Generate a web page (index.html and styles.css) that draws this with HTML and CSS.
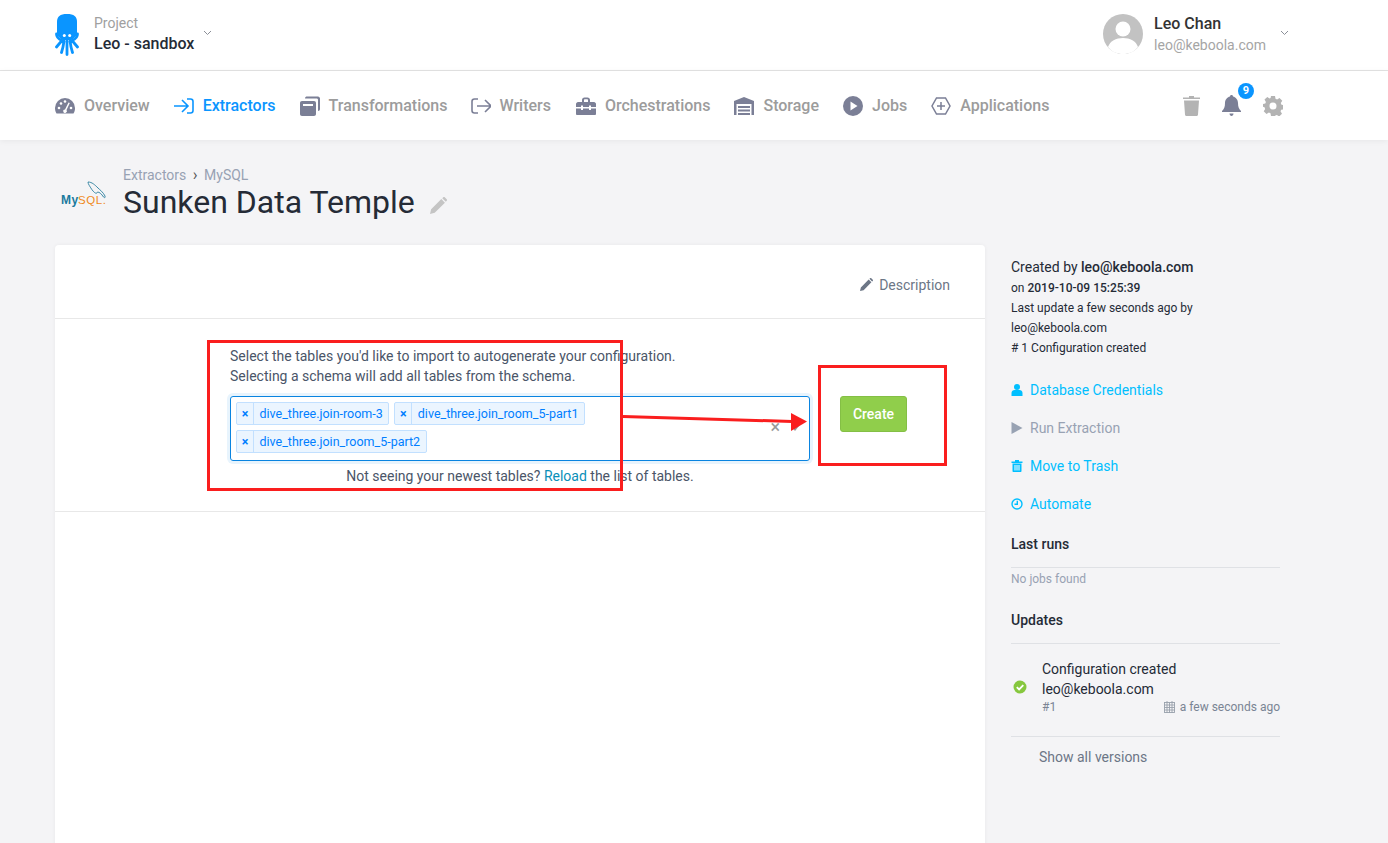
FILE: index.html
```html
<!DOCTYPE html>
<html lang="en">
<head>
    <meta charset="UTF-8">
    <title>Sunken Data Temple</title>
    <link rel="stylesheet" href="styles.css">
</head>
<body>
<div class="top">
    <div class="project">
        <svg class="logo" width="24" height="42" viewBox="0 0 24 42">
            <path fill="#0a95ff" d="M2 8C2 2.500 5 0 12 0s10 2.500 10 8v11c0 2-1 3-3 5-1 1-2 2-3 2H8c-1 0-2-1-3-2-2-2-3-3-3-5z"/>
            <circle cx="9.300" cy="21.500" r="1.500" fill="#fff"/><circle cx="14.700" cy="21.500" r="1.500" fill="#fff"/>
            <path fill="none" stroke="#0a95ff" stroke-width="2.800" stroke-linecap="round" d="M1.500 20c0 3 2 5 5.500 6.500L1.500 33M22.500 20c0 3-2 5-5.500 6.500L22.500 33M9 27c-.5 4-1 7-2.500 11.500M15 27c.5 4 1 7 2.500 11.500M12 27v13.500"/>
        </svg>
        <div class="project-text">
            <div class="project-label">Project</div>
            <div class="project-name">Leo - sandbox</div>
        </div>
        <svg class="caret" width="9" height="6" viewBox="0 0 9 6"><path d="M1 1l3.500 3.500L8 1" fill="none" stroke="#8b8f98" stroke-width="1"/></svg>
    </div>
    <div class="user">
        <svg class="avatar" width="40" height="40" viewBox="0 0 40 40">
            <circle cx="20" cy="20" r="20" fill="#c2c2c2"/>
            <circle cx="20" cy="15" r="7.500" fill="#fff"/>
            <path fill="#fff" d="M5 33c2-6 8-9 15-9s13 3 15 9c-4 5-9 7-15 7s-11-2-15-7z"/>
        </svg>
        <div class="user-text">
            <div class="user-name">Leo Chan</div>
            <div class="user-mail">leo@keboola.com</div>
        </div>
        <svg class="caret" width="9" height="6" viewBox="0 0 9 6"><path d="M1 1l3.500 3.500L8 1" fill="none" stroke="#8b8f98" stroke-width="1"/></svg>
    </div>
</div>

<div class="nav">
    <a class="nav-item">
        <svg width="20" height="18" viewBox="0 0 20 18"><path fill="#7b7f96" d="M10 1a10 10 0 0 0-10 10c0 2 .5 4 1.500 5.500h17C19.500 15 20 13 20 11A10 10 0 0 0 10 1z"/><g fill="#fff"><circle cx="4" cy="11" r="1.300"/><circle cx="6" cy="6.500" r="1.300"/><circle cx="10" cy="4.500" r="1.300"/><circle cx="16" cy="11" r="1.300"/><path d="M13.500 5.500l1.300.6-3.300 7a1.800 1.800 0 1 1-1.500-.7z"/></g></svg>
        Overview
    </a>
    <a class="nav-item active">
        <svg width="20" height="16" viewBox="0 0 20 16" fill="none" stroke="#0a95ff" stroke-width="1.600"><path d="M0 8h14M8 2l6 6-6 6M13 1h3.500C18 1 19 2 19 3.500v9c0 1.500-1 2.500-2.500 2.500H13"/></svg>
        Extractors
    </a>
    <a class="nav-item">
        <svg width="20" height="20" viewBox="0 0 20 20"><path fill="#7b7f96" d="M5 2.500C5 1 6 .5 7 .5h11c1 0 2 1 2 2V13c0 1-.7 2-2 2v-11c0-1-.5-1.500-1.500-1.500zM2 5h12c1.200 0 2 .8 2 2v11c0 1.200-.8 2-2 2H2c-1.200 0-2-.8-2-2V7c0-1.200.8-2 2-2z"/><rect x="3" y="8" width="10" height="2" fill="#fff"/></svg>
        Transformations
    </a>
    <a class="nav-item writers">
        <svg width="20" height="16" viewBox="0 0 20 16" fill="none" stroke="#7b7f96" stroke-width="1.600"><path d="M20 8H6M14 2l6 6-6 6M7 1H3.500C2 1 1 2 1 3.500v9C1 14 2 15 3.500 15H7"/></svg>
        Writers
    </a>
    <a class="nav-item">
        <svg width="20" height="18" viewBox="0 0 20 18"><path fill="#7b7f96" d="M6 3c0-1.500 1-2.500 2.500-2.500h3C13 .5 14 1.500 14 3v2h-2V3c0-.5-.2-.7-.7-.7H8.700C8.200 2.300 8 2.500 8 3v2H6zM2 5h16c1 0 2 1 2 2v3h-5V8.500h-2V10H7V8.500H5V10H0V7c0-1 1-2 2-2zM0 11.500h5V13h2v-1.500h6V13h2v-1.500h5V17c0 .5-.5 1-1 1H1c-.5 0-1-.5-1-1z"/></svg>
        Orchestrations
    </a>
    <a class="nav-item">
        <svg width="20" height="18" viewBox="0 0 20 18"><path fill="#7b7f96" d="M10 0l10 4v14h-2.500V7h-15v11H0V4z"/><path fill="#7b7f96" d="M4 9h12v2H4zM4 12.500h12v2H4zM4 16h12v2H4z"/></svg>
        Storage
    </a>
    <a class="nav-item">
        <svg width="20" height="20" viewBox="0 0 20 20"><circle cx="10" cy="10" r="10" fill="#7b7f96"/><path d="M7.500 5.500l7 4.500-7 4.500z" fill="#fff"/></svg>
        Jobs
    </a>
    <a class="nav-item">
        <svg width="20" height="18" viewBox="0 0 20 18" fill="none" stroke="#7b7f96" stroke-width="1.500"><path d="M5.500 1h9L19 9l-4.500 8h-9L1 9zM10 5v8M6 9h8"/></svg>
        Applications
    </a>
    <div class="nav-tools">
        <svg width="17" height="21" viewBox="0 0 17 21"><path fill="#b3b3b3" d="M0 2.500h6V1h5v1.500h6V4H0zM1 5.500h15l-1 14c0 .8-.6 1.500-1.500 1.500h-10C2.600 21 2 20.300 2 19.500z"/></svg>
        <div class="bell">
            <svg width="19" height="21" viewBox="0 0 19 21"><path fill="#7b7f96" d="M9.500 0c1 0 1.500.6 1.500 1.500C14 2.200 16 5 16 8c0 4 1 6 3 8v1H0v-1c2-2 3-4 3-8 0-3 2-5.800 5-6.500C8 .6 8.500 0 9.500 0zM7.500 18.500h4c0 1.500-1 2.500-2 2.500s-2-1-2-2.500z"/></svg>
            <span class="badge">9</span>
        </div>
        <svg width="20" height="20" viewBox="0 0 20 20"><path fill="#b3b3b3" fill-rule="evenodd" d="M8 0h4l.5 2.800 1.600.7L16.500 2l2.800 2.800-1.500 2.300.7 1.600 2.500.5v4l-2.800.5-.7 1.600 1.500 2.400-2.800 2.800-2.300-1.500-1.600.6L12 20H8l-.5-2.800-1.600-.7-2.400 1.500L.7 15.200l1.500-2.300-.7-1.700L-.5 10.500V8l2.800-.5.6-1.600L1.500 3.500 4.300.9l2.300 1.500 1-.5zM10 6.500a3.500 3.500 0 1 0 0 7 3.500 3.500 0 0 0 0-7z"/></svg>
    </div>
</div>

<div class="page">
    <div class="heading">
        <svg class="mysql" width="50" height="30" viewBox="0 0 50 30">
            <path d="M28 1c4 0 7 3 10 6 2 2 5 4 7 8 .5 2-.5 2-1.500 1-2-3-4-5-6-5-1 3-4 0-6-3-1.500-2.500-3.500-5-3.500-7z" fill="none" stroke="#2b7f9e" stroke-width=".9"/>
            <text x="1" y="23" class="my">My</text><text x="18" y="23" class="sql">SQL.</text>
        </svg>
        <div>
            <div class="crumbs">Extractors <span class="sep">›</span> MySQL</div>
            <div class="title-row">
                <h1>Sunken Data Temple</h1>
                <svg class="title-edit" width="17" height="17" viewBox="0 0 18 18"><path fill="#c4c4c4" d="M0 18l1.200-5L12 2.200l3.800 3.800L5 16.800zM13 1.200L14 .3c.5-.4 1.200-.4 1.600 0l2.100 2.100c.4.400.4 1.100 0 1.600l-1 1z"/></svg>
            </div>
        </div>
    </div>

    <div class="columns">
        <div class="card">
            <div class="card-head">
                <a class="desc-link">
                    <svg width="13" height="13" viewBox="0 0 18 18"><path fill="#6c7686" d="M0 18l1.200-5L12 2.200l3.800 3.800L5 16.800zM13 1.200L14 .3c.5-.4 1.200-.4 1.600 0l2.100 2.100c.4.400.4 1.100 0 1.600l-1 1z"/></svg>
                    Description
                </a>
            </div>
            <div class="card-form">
                <div class="form-left">
                    <p class="hint">Select the tables you'd like to import to autogenerate your configuration.<br>Selecting a schema will add all tables from the schema.</p>
                    <div class="select">
                        <div class="tags">
                            <span class="tag"><i>×</i><b>dive_three.join-room-3</b></span>
                            <span class="tag"><i>×</i><b>dive_three.join_room_5-part1</b></span>
                            <span class="tag"><i>×</i><b>dive_three.join_room_5-part2</b></span>
                        </div>
                        <span class="clear">×</span>
                        <span class="drop"></span>
                    </div>
                    <p class="reload">Not seeing your newest tables? <a>Reload</a> the list of tables.</p>
                </div>
                <button class="create">Create</button>
            </div>
        </div>

        <div class="side">
            <div class="meta">
                <div class="meta-first">Created by <strong>leo@keboola.com</strong></div>
                <div>on <strong>2019-10-09 15:25:39</strong></div>
                <div>Last update a few seconds ago by</div>
                <div>leo@keboola.com</div>
                <div># 1 Configuration created</div>
            </div>
            <ul class="actions">
                <li><svg width="12" height="12" viewBox="0 0 11 12"><circle cx="5.500" cy="3" r="3" fill="#00bfff"/><path d="M0 12V9c0-2 1.500-3 3-3h5c1.500 0 3 1 3 3v3z" fill="#00bfff"/></svg>Database Credentials</li>
                <li class="off"><svg width="12" height="12" viewBox="0 0 11 12"><path d="M0 0l11 6-11 6z" fill="#98a2b3"/></svg>Run Extraction</li>
                <li><svg width="12" height="12" viewBox="0 0 11 12"><path d="M0 1.500h3.500V0h4v1.500H11V3H0zM1 3.500h9V11c0 .6-.4 1-1 1H2c-.6 0-1-.4-1-1z" fill="#00bfff"/><rect x="2.500" y="5" width="6" height="5.500" fill="#7fdfff"/></svg>Move to Trash</li>
                <li><svg width="12" height="12" viewBox="0 0 12 12" fill="none" stroke="#00bfff" stroke-width="1.400"><circle cx="6" cy="6" r="5"/><path d="M6.300 2.800v3.500H3.500"/></svg>Automate</li>
            </ul>
            <h3 class="side-title">Last runs</h3>
            <div class="no-jobs">No jobs found</div>
            <h3 class="side-title updates">Updates</h3>
            <div class="version">
                <svg width="14" height="14" viewBox="0 0 14 14"><circle cx="7" cy="7" r="6.500" fill="#86c73e"/><path d="M3.800 7.200l2.300 2.300 4.200-4.300" fill="none" stroke="#fff" stroke-width="1.800"/></svg>
                <div class="version-body">
                    <div>Configuration created</div>
                    <div>leo@keboola.com</div>
                    <div class="version-meta">
                        <span>#1</span>
                        <span class="when"><svg width="11" height="12" viewBox="0 0 11 12" fill="none" stroke="#98a0ab" stroke-width=".9"><rect x=".5" y="1.500" width="10" height="10"/><path d="M.5 4h10M.5 6.500h10M.5 9h10M3 0v12M5.500 1.500V12M8 0v12"/></svg>a few seconds ago</span>
                    </div>
                </div>
            </div>
            <div class="show-all">Show all versions</div>
        </div>
    </div>
</div>

<!-- annotations drawn on top of the screenshot -->
<div class="mark mark-left"></div>
<div class="mark mark-right"></div>
<svg class="arrow" width="190" height="30" viewBox="0 0 190 30"><path d="M1 10.500l169 5" stroke="#fa1e1e" stroke-width="3" fill="none"/><path d="M169 7l16 8.500-16 9.500z" fill="#fa1e1e"/></svg>
</body>
</html>
```

FILE: styles.css
```css
html, body {
    margin: 0;
    height: 843px;
    overflow: hidden;
}
body {
    background: #f4f4f6;
    font-family: Roboto, "Liberation Sans", sans-serif;
    font-size: 14px;
    color: #252b36;
    position: relative;
}
.top {
    height: 70px;
    background: #fff;
    border-bottom: 1px solid #e3e3e3;
    display: flex;
    justify-content: space-between;
    align-items: center;
    padding: 0 99px 0 55px;
}
.project, .user {
    display: flex;
    align-items: center;
}
.project .caret { margin: 0 0 5px 9px; }
.user .caret { margin: 0 0 5px 14px; }
.logo { margin-right: 15px; }
.project-text { margin-bottom: 3px; }
.project-label {
    color: #a0a0a0;
    font-size: 14px;
    line-height: 20px;
    margin-bottom: 1px;
}
.project-name {
    font-size: 16px;
    font-weight: 500;
    line-height: 20px;
}
.avatar { margin: 0 11px 2px 0; }
.user-name {
    font-size: 16px;
    font-weight: 500;
    line-height: 20px;
    color: #333;
}
.user-mail {
    font-size: 14px;
    line-height: 22px;
    color: #a5a5a5;
}
.nav {
    height: 69px;
    background: #fff;
    box-shadow: 0 1px 6px rgba(0, 0, 0, .06);
    display: flex;
    align-items: center;
    padding: 0 105px 0 55px;
    gap: 24px;
    position: relative;
}
.nav-item {
    display: flex;
    align-items: center;
    gap: 9px;
    font-size: 16px;
    font-weight: 500;
    color: #9c9c9c;
}
.nav-item.active { color: #0a95ff; }
.nav-item.writers {
    gap: 8px;
    margin-right: 1px;
}
.nav-tools {
    margin-left: auto;
    display: flex;
    align-items: center;
    gap: 22px;
}
.bell { position: relative; display: flex; }
.badge {
    position: absolute;
    top: -12px;
    right: -13px;
    width: 16px;
    height: 16px;
    border-radius: 50%;
    background: #0a95ff;
    color: #fff;
    font-size: 11px;
    font-weight: 700;
    line-height: 16px;
    text-align: center;
}
.page { padding: 27px 108px 0 55px; }
.heading {
    display: flex;
    align-items: flex-start;
    height: 78px;
    gap: 13px;
}
.mysql { margin: 14px 0 0 5px; }
.my { font: 700 12px "Liberation Sans", sans-serif; fill: #1a7a9e; letter-spacing: .6px; }
.sql { font: 400 11.500px "Liberation Sans", sans-serif; fill: #f08a1d; letter-spacing: .6px; }
.crumbs {
    font-size: 14px;
    line-height: 16px;
    color: #98a2b3;
}
.sep { color: #555; margin: 0 3px; font-size: 16px; }
.title-row {
    display: flex;
    align-items: center;
    gap: 15px;
}
.title-edit { margin-top: 7px; }
h1 {
    margin: 0;
    font-size: 32px;
    font-weight: 400;
    line-height: 38px;
    color: #252b36;
}
.columns {
    display: flex;
    gap: 26px;
}
.card {
    width: 930px;
    height: 640px;
    background: #fff;
    border-radius: 4px;
    box-shadow: 0 0 4px rgba(0, 0, 0, .05);
}
.card-head {
    border-bottom: 1px solid #e8e8e8;
    display: flex;
    justify-content: flex-end;
    align-items: center;
    padding: 6px 35px 0 0;
    box-sizing: border-box;
    height: 74px;
}
.desc-link {
    display: flex;
    align-items: center;
    gap: 6px;
    color: #6c7686;
    font-size: 14px;
}
.card-form {
    display: flex;
    gap: 30px;
    padding: 27px 78px 0 175px;
    height: 193px;
    box-sizing: border-box;
    border-bottom: 1px solid #e8e8e8;
}
.form-left { width: 580px; }
.hint {
    margin: 0 0 10px;
    line-height: 20px;
    color: #4a5568;
}
.select {
    position: relative;
    border: 1px solid #0a84e0;
    border-radius: 3px;
    box-shadow: 0 0 0 3px #e8f4fd;
    height: 65px;
    box-sizing: border-box;
    padding: 5px 60px 0 5px;
}
.tags {
    display: flex;
    flex-wrap: wrap;
    gap: 5px;
}
.tag {
    display: flex;
    height: 23px;
    box-sizing: border-box;
    border: 1px solid #c2e0ff;
    border-radius: 2px;
    background: #ebf5ff;
    color: #007eff;
    font-size: 12.500px;
    line-height: 21px;
}
.tag i {
    font-style: normal;
    font-weight: 700;
    width: 16px;
    text-align: center;
    border-right: 1px solid #c2e0ff;
}
.tag b {
    font-weight: 400;
    padding: 0 5.500px 0 5.500px;
}
.clear {
    position: absolute;
    right: 29px;
    top: 19px;
    color: #999;
    font-size: 18px;
    line-height: 22px;
}
.drop {
    position: absolute;
    right: 10px;
    top: 29px;
    border: 4px solid transparent;
    border-top: 5px solid #999;
}
.reload {
    margin: 5px 0 0;
    line-height: 20px;
    text-align: center;
    color: #4a5568;
}
.reload a { color: #0a8fb8; }
.create {
    width: 67px;
    height: 36px;
    margin-top: 50px;
    border: 1px solid #84bf45;
    border-radius: 3px;
    background: #90ce4b;
    color: #fff;
    font: 500 14px Roboto, sans-serif;
}
.side {
    width: 269px;
    font-size: 12px;
}
.meta { line-height: 20px; margin-top: 12px; }
.meta-first { font-size: 14px; line-height: 21px; }
strong { font-weight: 500; }
.actions {
    list-style: none;
    margin: 13px 0 0;
    padding: 0;
}
.actions li {
    display: flex;
    align-items: center;
    gap: 7px;
    height: 38px;
    font-size: 14px;
    color: #00bfff;
}
.actions li.off { color: #98a2b3; }
.side-title {
    margin: 0;
    font-size: 14px;
    font-weight: 500;
    line-height: 20px;
    padding-bottom: 13px;
    border-bottom: 1px solid #dfe1e5;
    margin-top: 11px;
}
.side-title.updates { margin-top: 23px; }
.no-jobs {
    color: #98a2b3;
    margin-top: 3px;
    line-height: 16px;
}
.version {
    display: flex;
    align-items: center;
    gap: 10px;
    padding: 15px 0 21px 1px;
    border-bottom: 1px solid #dfe1e5;
}
.version > svg { margin: 0 0 0 1px; }
.version-body {
    flex: 1;
    font-size: 14px;
    line-height: 20px;
    margin-left: 5px;
}
.version-meta {
    display: flex;
    justify-content: space-between;
    font-size: 12px;
    line-height: 16px;
    color: #7a8494;
}
.when {
    display: flex;
    align-items: center;
    gap: 5px;
}
.show-all {
    margin: 10px 0 0 28px;
    font-size: 14px;
    line-height: 20px;
    color: #6c7686;
}
.mark {
    position: absolute;
    border: 3px solid #fa1e1e;
    box-sizing: border-box;
}
.mark-left {
    left: 207px;
    top: 340px;
    width: 416px;
    height: 151px;
}
.mark-right {
    left: 818px;
    top: 365px;
    width: 129px;
    height: 101px;
}
.arrow {
    position: absolute;
    left: 622px;
    top: 406px;
}
```
